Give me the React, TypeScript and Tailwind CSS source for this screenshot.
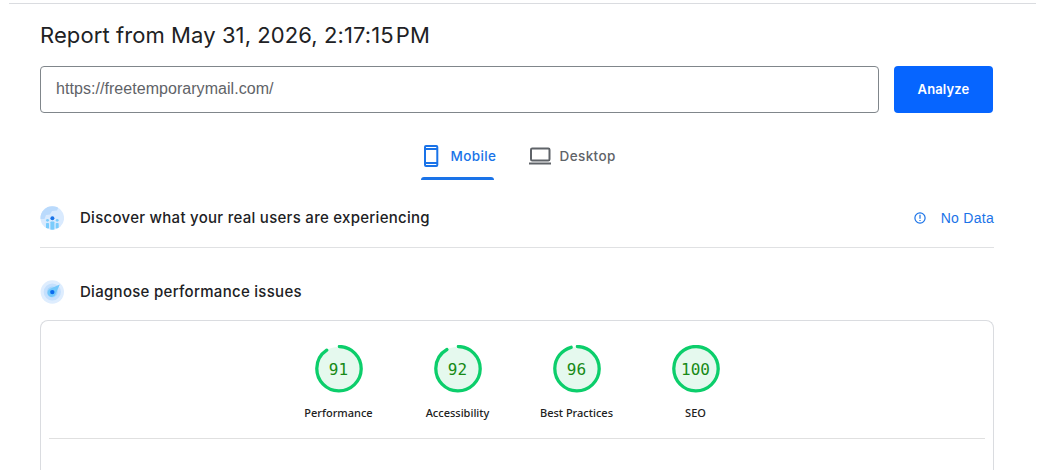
interface Score {
  label: string;
  value: number;
}

const scores: Score[] = [
  { label: "Performance", value: 91 },
  { label: "Accessibility", value: 92 },
  { label: "Best Practices", value: 96 },
  { label: "SEO", value: 100 },
];

const RADIUS = 22.2;
const CIRCUMFERENCE = 2 * Math.PI * RADIUS;

function Gauge({ label, value }: Score) {
  // Round caps stick out of both ends of the arc
  const arc = value === 100 ? CIRCUMFERENCE : (value / 100) * CIRCUMFERENCE - 1.7;

  return (
    <div className="flex w-[119px] flex-col items-center">
      <div className="grid size-12 place-items-center">
        <svg viewBox="0 0 48 48" className="col-start-1 row-start-1 size-12">
          <circle cx="24" cy="23.7" r="22" fill="#e5f9ee" />
          <circle
            cx="24"
            cy="23.7"
            r={RADIUS}
            fill="none"
            stroke="#0cce6b"
            strokeWidth="3.3"
            strokeLinecap="round"
            strokeDasharray={`${arc} ${CIRCUMFERENCE}`}
            transform="rotate(-89 24 23.7)"
          />
        </svg>
        <span className="col-start-1 row-start-1 pt-px font-['DejaVu_Sans_Mono',monospace] text-[16px] leading-none text-[#178a17]">
          {value}
        </span>
      </div>
      <span className="mt-3 font-['Noto_Sans',sans-serif] text-[11px] leading-4 font-medium whitespace-nowrap text-[#212121]">
        {label}
      </span>
    </div>
  );
}

function UsersIcon() {
  return (
    <svg viewBox="0 0 24 24" className="size-6">
      <defs>
        <clipPath id="users-clip">
          <circle cx="12.3" cy="12" r="11.8" />
        </clipPath>
      </defs>
      <g clipPath="url(#users-clip)">
        <rect width="25" height="24" fill="#d9eafe" />
        <path d="M0 0h19l-2 4.5-5 .5-2 3.5-4 .5-1.5 4H0Z" fill="#badafc" />
        <g fill="#7accfc">
          <rect x="6" y="17" width="3" height="5.5" rx="0.8" />
          <rect x="10.4" y="15.4" width="4" height="9" rx="0.8" />
          <rect x="15.7" y="17" width="3" height="5.5" rx="0.8" />
          <circle cx="7.5" cy="14.3" r="1.4" />
          <circle cx="17.2" cy="14.3" r="1.4" />
        </g>
        <circle cx="12.4" cy="12.3" r="2" fill="#1a73e8" />
      </g>
    </svg>
  );
}

function CompassIcon() {
  return (
    <svg viewBox="0 0 24 24" className="size-6">
      <circle cx="12.3" cy="12" r="11.7" fill="#deedfe" />
      <circle cx="12.3" cy="12" r="8.6" fill="#c5e0fd" />
      <circle cx="12.3" cy="12" r="5.4" fill="#a5d5fc" />
      <path d="M19.8 4.5 15.7 14A4.2 4.2 0 1 1 10.2 8.8Z" fill="#72c8fb" />
      <circle cx="12.3" cy="12.1" r="2.2" fill="#0b6bee" />
    </svg>
  );
}

export default function App() {
  return (
    <div className="h-[470px] w-[1045px] overflow-hidden bg-white pt-[3px] font-['Inter',sans-serif]">
      <div className="mr-[9px] ml-[9px] h-px bg-[#dadce0]" />

      <main className="ml-10 w-[954px]">
        <h1 className="mt-[15px] h-8 text-[22px] leading-[33px] tracking-[0.09px] whitespace-nowrap text-[#202124]">
          Report from May 31, 2026, 2:17:15&#8202;PM
        </h1>

        {/* URL bar */}
        <div className="mt-[15px] flex h-[47px] gap-[15px]">
          <input
            type="text"
            defaultValue="https://freetemporarymail.com/"
            className="w-[839px] rounded-[4px] border border-[#80868b] px-[15px] pb-px font-['Liberation_Sans',sans-serif] text-[16px] tracking-[0.05px] text-[#5f6368] outline-none"
          />
          <button className="w-[99px] rounded-[4px] bg-[#0665ff] pt-px text-[13px] font-semibold tracking-[0.15px] text-white">
            Analyze
          </button>
        </div>

        {/* Device tabs */}
        <div className="mt-[19px] ml-[381px] flex h-12 gap-[35px] text-[13.5px] font-medium tracking-[0.4px]">
          <button className="flex h-12 w-[73px] flex-col justify-between text-[#1a73e8]">
            <span className="flex h-[45px] items-center gap-[11.5px] pt-[2px] whitespace-nowrap">
              <svg viewBox="0 0 18 24" className="h-6 w-[18px] shrink-0">
                <path
                  fillRule="evenodd"
                  fill="currentColor"
                  d="M5 1h10.3a2 2 0 0 1 2 2v18a2 2 0 0 1-2 2H5a2 2 0 0 1-2-2V3a2 2 0 0 1 2-2Zm0 2v1h10.3V3Zm0 3v12h10.3V6Zm0 14v1h10.3v-1Z"
                />
              </svg>
              <span className="pt-[2px]">Mobile</span>
            </span>
            <span className="h-[3px] w-full shrink-0 rounded-t-[3px] bg-[#1a73e8]" />
          </button>
          <button className="flex h-[45px] items-center gap-[8.5px] pt-[2px] text-[#5f6368]">
            <svg viewBox="0 0 22 18" className="h-[18px] w-[22px]">
              <rect x="2" y="1.5" width="18.5" height="12" rx="1.2" fill="none" stroke="currentColor" strokeWidth="2" />
              <path d="M0 16.5h22" stroke="currentColor" strokeWidth="2" />
            </svg>
            <span className="pt-[2px]">Desktop</span>
          </button>
        </div>

        {/* Field data */}
        <section className="mt-[8px] flex h-[60px] items-center border-b border-[#e0e1e3]">
          <UsersIcon />
          <h2 className="ml-4 pt-px text-[15px] font-medium tracking-[0.28px] text-[#202124]">
            Discover what your real users are experiencing
          </h2>
          <div className="ml-auto flex items-center gap-[15px] text-[#1a73e8]">
            <svg viewBox="0 0 12 12" className="size-3" fill="none" stroke="currentColor">
              <circle cx="6" cy="6" r="5.1" strokeWidth="1.2" />
              <path d="M6 2.8v4M6 7.9v1.2" strokeWidth="1.2" />
            </svg>
            <span className="pt-px font-['Liberation_Sans',sans-serif] text-[14px] tracking-[0.28px]">No Data</span>
          </div>
        </section>

        {/* Lab data */}
        <section>
          <div className="mt-8 flex h-6 items-center">
            <CompassIcon />
            <h2 className="ml-4 text-[15px] font-medium tracking-[0.29px] text-[#202124]">
              Diagnose performance issues
            </h2>
          </div>

          <div className="mt-4 h-[160px] rounded-t-[8px] border border-b-0 border-[#dadce0] px-[8px] pt-6">
            <div className="ml-[230px] flex h-[93px]">
              {scores.map((score) => (
                <Gauge key={score.label} {...score} />
              ))}
            </div>
            <div className="h-px bg-[#e0e0e0]" />
          </div>
        </section>
      </main>
    </div>
  );
}
